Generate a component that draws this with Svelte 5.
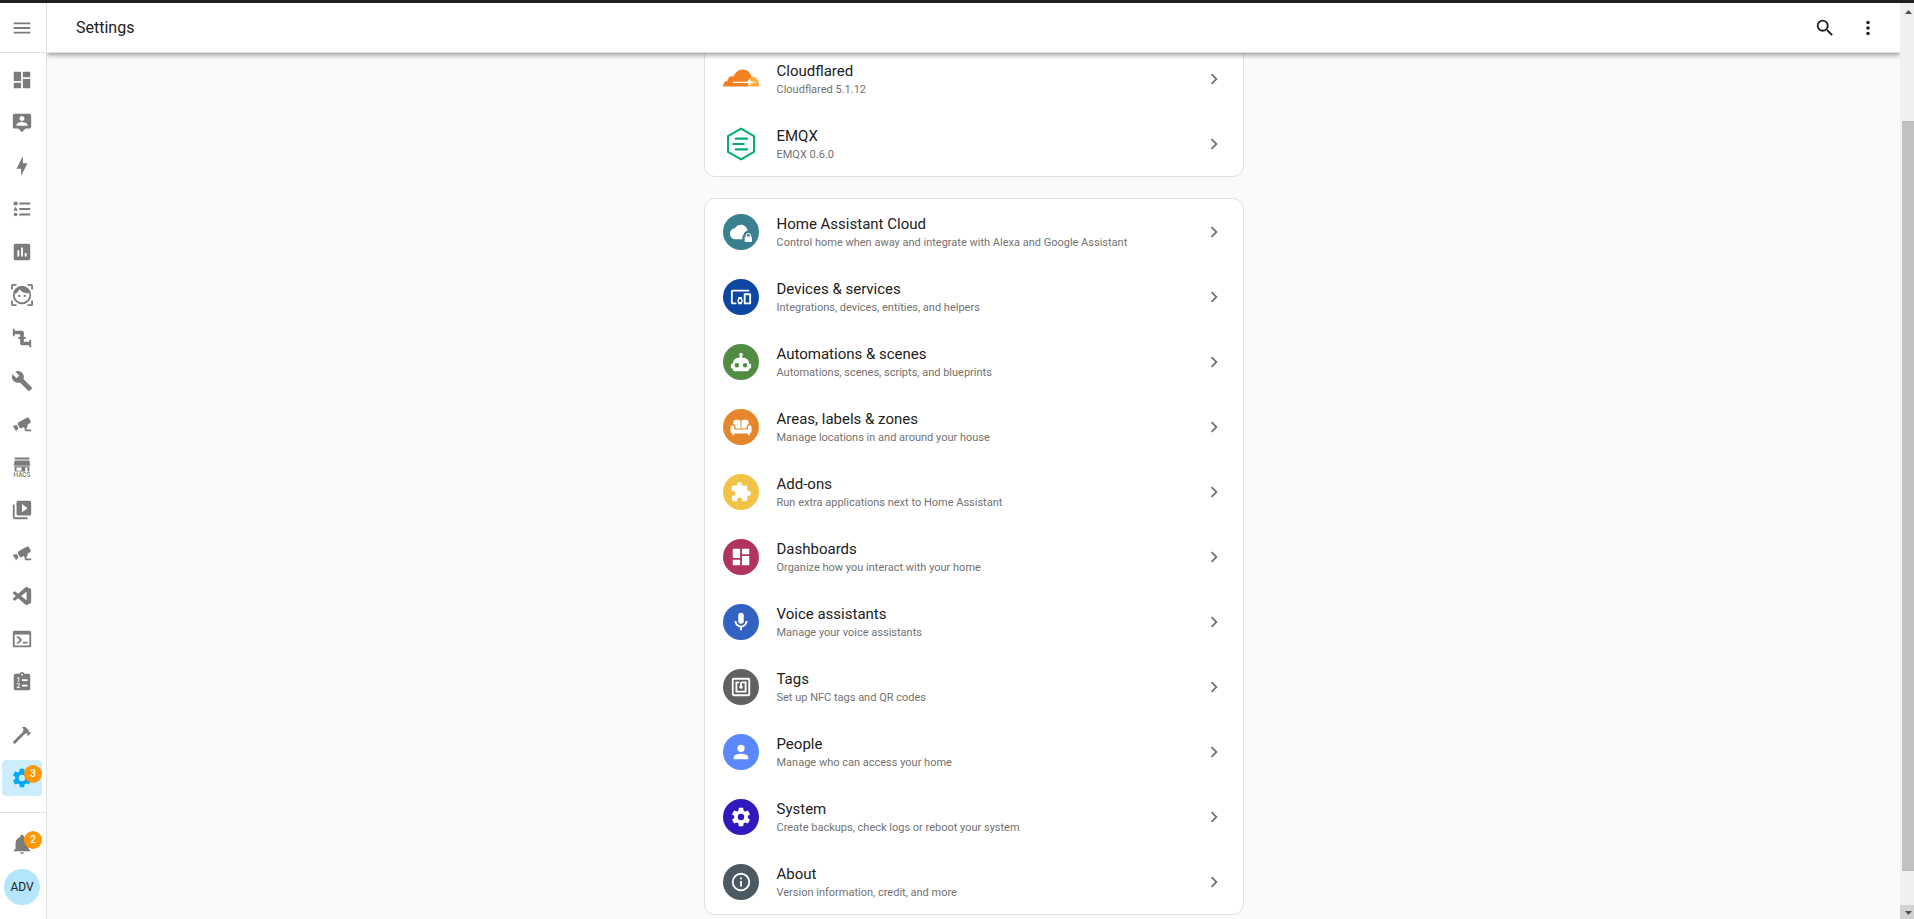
<script>
  const icons = {
    menu: "M3,6H21V8H3V6M3,11H21V13H3V11M3,16H21V18H3V16Z",
    dashboard: "M13,3V9H21V3M13,21H21V11H13M3,21H11V15H3M3,13H11V3H3V13Z",
    tooltipAccount:
      "M20,2H4A2,2 0 0,0 2,4V16A2,2 0 0,0 4,18H8L12,22L16,18H20A2,2 0 0,0 22,16V4A2,2 0 0,0 20,2M12,4.3C13.5,4.3 14.7,5.5 14.7,7C14.7,8.5 13.5,9.7 12,9.7C10.5,9.7 9.3,8.5 9.3,7C9.3,5.5 10.5,4.3 12,4.3M18,15H6V14.1C6,12.1 10,11 12,11C14,11 18,12.1 18,14.1V15Z",
    bolt: "M11 15H6L13 1V9H18L11 23V15Z",
    list: "M5,9.5L7.5,14H2.5L5,9.5M3,4H7V8H3V4M5,20A2,2 0 0,0 7,18A2,2 0 0,0 5,16A2,2 0 0,0 3,18A2,2 0 0,0 5,20M9,5V7H21V5H9M9,19H21V17H9V19M9,13H21V11H9V13Z",
    chart: "M9 17H7V10H9V17M13 17H11V7H13V17M17 17H15V13H17V17M19 3H5C3.9 3 3 3.9 3 5V19C3 20.1 3.9 21 5 21H19C20.1 21 21 20.1 21 19V5C21 3.9 20.1 3 19 3Z",
    face: "M9,11.75A1.25,1.25 0 0,0 7.75,13A1.25,1.25 0 0,0 9,14.25A1.25,1.25 0 0,0 10.25,13A1.25,1.25 0 0,0 9,11.75M15,11.75A1.25,1.25 0 0,0 13.75,13A1.25,1.25 0 0,0 15,14.25A1.25,1.25 0 0,0 16.25,13A1.25,1.25 0 0,0 15,11.75M12,2A10,10 0 0,0 2,12A10,10 0 0,0 12,22A10,10 0 0,0 22,12A10,10 0 0,0 12,2M12,20C7.59,20 4,16.41 4,12C4,11.71 4,11.42 4.05,11.14C6.41,10.09 8.28,8.16 9.26,5.77C11.07,8.33 14.05,10 17.42,10C18.2,10 18.95,9.91 19.67,9.74C19.88,10.45 20,11.21 20,12C20,16.41 16.41,20 12,20M0,2A2,2 0 0,1 2,0H6V2H2V6H0V2M24,22A2,2 0 0,1 22,24H18V22H22V18H24V22M2,24A2,2 0 0,1 0,22V18H2V22H6V24H2M22,0A2,2 0 0,1 24,2V6H22V2H18V0H22Z",
    pipe: "M22,14H20V16H14V13H16V11H14V6A2,2 0 0,0 12,4H4V2H2V10H4V8H10V11H8V13H10V18A2,2 0 0,0 12,20H20V22H22",
    wrench:
      "M22.7,19L13.6,9.9C14.5,7.6 14,4.9 12.1,3C10.1,1 7.1,0.6 4.7,1.7L9,6L6,9L1.6,4.7C0.4,7.1 0.9,10.1 2.9,12.1C4.8,14 7.5,14.5 9.8,13.6L18.9,22.7C19.3,23.1 19.9,23.1 20.3,22.7L22.6,20.4C23.1,20 23.1,19.3 22.7,19Z",
    cctv: "M18.15,4.94C17.77,4.91 17.37,5 17,5.2L8.35,10.2C7.39,10.76 7.07,12 7.62,12.94L9.12,15.53C9.67,16.5 10.89,16.82 11.85,16.27L13.65,15.23C13.92,15.69 14.32,16.06 14.81,16.27V18.04C14.81,19.13 15.7,20 16.81,20H22V18.04H16.81V16.27C17.72,15.87 18.31,14.97 18.31,14C18.31,13.54 18.19,13.11 17.97,12.73L20.5,11.27C21.47,10.71 21.8,9.5 21.24,8.53L19.74,5.94C19.4,5.34 18.79,5 18.15,4.94M6.22,13.17L2,13.87L2.75,15.17L4.75,18.63L5.5,19.93L8.22,16.63L6.22,13.17Z",
    playBox:
      "M4,6H2V20A2,2 0 0,0 4,22H18V20H4V6M20,2H8A2,2 0 0,0 6,4V16A2,2 0 0,0 8,18H20A2,2 0 0,0 22,16V4A2,2 0 0,0 20,2M12,14.5V5.5L18,10L12,14.5Z",
    vscode:
      "M23.15 2.587L18.21.21a1.494 1.494 0 0 0-1.705.29l-9.46 8.63-4.12-3.128a.999.999 0 0 0-1.276.057L.327 7.261A1 1 0 0 0 .326 8.74L3.899 12 .326 15.26a1 1 0 0 0 .001 1.479L1.65 17.94a.999.999 0 0 0 1.276.057l4.12-3.128 9.46 8.63a1.492 1.492 0 0 0 1.704.29l4.942-2.377A1.5 1.5 0 0 0 24 20.06V3.939a1.5 1.5 0 0 0-.85-1.352zm-5.146 14.861L10.826 12l7.178-5.448v10.896z",
    console:
      "M20,19V7H4V19H20M20,3A2,2 0 0,1 22,5V19A2,2 0 0,1 20,21H4A2,2 0 0,1 2,19V5C2,3.89 2.9,3 4,3H20M13,17V15H18V17H13M9.58,13L5.57,9H8.4L11.7,12.3C12.09,12.69 12.09,13.33 11.7,13.72L8.42,17H5.59L9.58,13Z",
    hammer:
      "M2,19.63L13.43,8.2L12.72,7.5L14.14,6.07L12,3.89C13.2,2.7 15.09,2.7 16.27,3.89L19.87,7.5L18.45,8.91H21.29L22,9.62L18.45,13.21L17.74,12.5V9.62L16.27,11.04L15.56,10.33L4.13,21.76L2,19.63Z",
    cog: "M12,15.5A3.5,3.5 0 0,1 8.5,12A3.5,3.5 0 0,1 12,8.5A3.5,3.5 0 0,1 15.5,12A3.5,3.5 0 0,1 12,15.5M19.43,12.97C19.47,12.65 19.5,12.33 19.5,12C19.5,11.67 19.47,11.34 19.43,11L21.54,9.37C21.73,9.22 21.78,8.95 21.66,8.73L19.66,5.27C19.54,5.05 19.27,4.96 19.05,5.05L16.56,6.05C16.04,5.66 15.5,5.32 14.87,5.07L14.5,2.42C14.46,2.18 14.25,2 14,2H10C9.75,2 9.54,2.18 9.5,2.42L9.13,5.07C8.5,5.32 7.96,5.66 7.44,6.05L4.95,5.05C4.73,4.96 4.46,5.05 4.34,5.27L2.34,8.73C2.21,8.95 2.27,9.22 2.46,9.37L4.57,11C4.53,11.34 4.5,11.67 4.5,12C4.5,12.33 4.53,12.65 4.57,12.97L2.46,14.63C2.27,14.78 2.21,15.05 2.34,15.27L4.34,18.73C4.46,18.95 4.73,19.03 4.95,18.95L7.44,17.94C7.96,18.34 8.5,18.68 9.13,18.93L9.5,21.58C9.54,21.82 9.75,22 10,22H14C14.25,22 14.46,21.82 14.5,21.58L14.87,18.93C15.5,18.67 16.04,18.34 16.56,17.94L19.05,18.95C19.27,19.03 19.54,18.95 19.66,18.73L21.66,15.27C21.78,15.05 21.73,14.78 21.54,14.63L19.43,12.97Z",
    bell: "M21,19V20H3V19L5,17V11C5,7.9 7.03,5.17 10,4.29C10,4.19 10,4.1 10,4A2,2 0 0,1 12,2A2,2 0 0,1 14,4C14,4.1 14,4.19 14,4.29C16.97,5.17 19,7.9 19,11V17L21,19M14,21A2,2 0 0,1 12,23A2,2 0 0,1 10,21",
    magnify:
      "M9.5,3A6.5,6.5 0 0,1 16,9.5C16,11.11 15.41,12.59 14.44,13.73L14.71,14H15.5L20.5,19L19,20.5L14,15.5V14.71L13.73,14.44C12.59,15.41 11.11,16 9.5,16A6.5,6.5 0 0,1 3,9.5A6.5,6.5 0 0,1 9.5,3M9.5,5C7,5 5,7 5,9.5C5,12 7,14 9.5,14C12,14 14,12 14,9.5C14,7 12,5 9.5,5Z",
    dots: "M12,16A2,2 0 0,1 14,18A2,2 0 0,1 12,20A2,2 0 0,1 10,18A2,2 0 0,1 12,16M12,10A2,2 0 0,1 14,12A2,2 0 0,1 12,14A2,2 0 0,1 10,12A2,2 0 0,1 12,10M12,4A2,2 0 0,1 14,6A2,2 0 0,1 12,8A2,2 0 0,1 10,6A2,2 0 0,1 12,4Z",
    chevron: "M8.59,16.58L13.17,12L8.59,7.41L10,6L16,12L10,18L8.59,16.58Z",
    cloudLock:
      "M6 20A6 6 0 0 1 0 14C0 10.9 2.34 8.36 5.35 8.03C6.6 5.64 9.11 4 12 4C15.64 4 18.5 6.6 19.2 10.5C16.6 10.9 14.9 12.9 14.7 15.3C13.9 15.8 13.5 16.6 13.5 17.5V20H6ZM22.8 17V15.5C22.8 14.1 21.4 13 20 13S17.2 14.1 17.2 15.5V17C16.6 17 16 17.6 16 18.2V21.7C16 22.4 16.6 23 17.2 23H22.7C23.4 23 24 22.4 24 21.8V18.3C24 17.6 23.4 17 22.8 17M21.5 17H18.5V15.5C18.5 14.7 19.2 14.2 20 14.2S21.5 14.7 21.5 15.5V17Z",
    devices:
      "M3 6H21V4H3C1.9 4 1 4.9 1 6V18C1 19.1 1.9 20 3 20H7V18H3V6M13 12H9V13.78C8.39 14.33 8 15.11 8 16C8 16.89 8.39 17.67 9 18.22V20H13V18.22C13.61 17.67 14 16.88 14 16S13.61 14.33 13 13.78V12M11 17.5C10.17 17.5 9.5 16.83 9.5 16S10.17 14.5 11 14.5 12.5 15.17 12.5 16 11.83 17.5 11 17.5M22 8H16C15.5 8 15 8.5 15 9V19C15 19.5 15.5 20 16 20H22C22.5 20 23 19.5 23 19V9C23 8.5 22.5 8 22 8M21 18H17V10H21V18Z",
    robot:
      "M12,2A2,2 0 0,1 14,4C14,4.74 13.6,5.39 13,5.73V7H14A7,7 0 0,1 21,14H22A1,1 0 0,1 23,15V18A1,1 0 0,1 22,19H21V20A2,2 0 0,1 19,22H5A2,2 0 0,1 3,20V19H2A1,1 0 0,1 1,18V15A1,1 0 0,1 2,14H3A7,7 0 0,1 10,7H11V5.73C10.4,5.39 10,4.74 10,4A2,2 0 0,1 12,2M7.5,13A2.5,2.5 0 0,0 5,15.5A2.5,2.5 0 0,0 7.5,18A2.5,2.5 0 0,0 10,15.5A2.5,2.5 0 0,0 7.5,13M16.5,13A2.5,2.5 0 0,0 14,15.5A2.5,2.5 0 0,0 16.5,18A2.5,2.5 0 0,0 19,15.5A2.5,2.5 0 0,0 16.5,13Z",
    sofa: "M6.5 4H9.7A1.8 1.8 0 0 1 11.5 5.8V13.5H6V12A3.6 3.6 0 0 0 3.7 8.7V6.8A2.8 2.8 0 0 1 6.5 4ZM17.5 4H14.3A1.8 1.8 0 0 0 12.5 5.8V13.5H18V12A3.6 3.6 0 0 1 20.3 8.7V6.8A2.8 2.8 0 0 0 17.5 4ZM2.5 10A2 2 0 0 1 4.5 12V14.8H19.5V12A2 2 0 0 1 23.5 12V17A2 2 0 0 1 21.5 19V21H19.5V19H4.5V21H2.5V19A2 2 0 0 1 .5 17V12A2 2 0 0 1 2.5 10Z",
    puzzle:
      "M20.5,11H19V7C19,5.89 18.1,5 17,5H13V3.5A2.5,2.5 0 0,0 10.5,1A2.5,2.5 0 0,0 8,3.5V5H4A2,2 0 0,0 2,7V10.8H3.5C5,10.8 6.2,12 6.2,13.5C6.2,15 5,16.2 3.5,16.2H2V20A2,2 0 0,0 4,22H7.8V20.5C7.8,19 9,17.8 10.5,17.8C12,17.8 13.2,19 13.2,20.5V22H17A2,2 0 0,0 19,20V16H20.5A2.5,2.5 0 0,0 23,13.5A2.5,2.5 0 0,0 20.5,11Z",
    microphone:
      "M12,2A3,3 0 0,1 15,5V11A3,3 0 0,1 12,14A3,3 0 0,1 9,11V5A3,3 0 0,1 12,2M19,11C19,14.53 16.39,17.44 13,17.93V21H11V17.93C7.61,17.44 5,14.53 5,11H7A5,5 0 0,0 12,16A5,5 0 0,0 17,11H19Z",
    nfc: "M18,6H13A2,2 0 0,0 11,8V10.28C10.41,10.62 10,11.26 10,12A2,2 0 0,0 12,14C13.11,14 14,13.1 14,12C14,11.26 13.6,10.62 13,10.28V8H16V16H8V8H10V6H8L6,6V18H18M20,20H4V4H20M20,2H4A2,2 0 0,0 2,4V20A2,2 0 0,0 4,22H20C21.11,22 22,21.1 22,20V4C22,2.89 21.11,2 20,2Z",
    account:
      "M12,4A4,4 0 0,1 16,8A4,4 0 0,1 12,12A4,4 0 0,1 8,8A4,4 0 0,1 12,4M12,14C16.42,14 20,15.79 20,18V20H4V18C4,15.79 7.58,14 12,14Z",
    info: "M11,9H13V7H11M12,20C7.59,20 4,16.41 4,12C4,7.59 7.59,4 12,4C16.41,4 20,7.59 20,12C20,16.41 16.41,20 12,20M12,2A10,10 0 0,0 2,12A10,10 0 0,0 12,22A10,10 0 0,0 22,12A10,10 0 0,0 12,2M11,17H13V11H11V17Z",
  };

  const panels = [
    { icon: "dashboard", name: "Overview" },
    { icon: "tooltipAccount", name: "Map" },
    { icon: "bolt", name: "Energy" },
    { icon: "list", name: "Logbook" },
    { icon: "chart", name: "History" },
    { icon: "face", name: "Double Take" },
    { icon: "pipe", name: "Pipes" },
    { icon: "wrench", name: "Configurator" },
    { icon: "cctv", name: "Cameras" },
    { icon: "hacs", name: "HACS" },
    { icon: "playBox", name: "Media" },
    { icon: "cctv", name: "Frigate" },
    { icon: "vscode", name: "Studio Code Server" },
    { icon: "console", name: "Terminal" },
    { icon: "todo", name: "To-do lists" },
  ];

  const addons = [
    { logo: "cloudflared", title: "Cloudflared", info: "Cloudflared 5.1.12" },
    { logo: "emqx", title: "EMQX", info: "EMQX 0.6.0" },
  ];

  const pages = [
    { icon: "cloudLock", color: "#3b808e", title: "Home Assistant Cloud", info: "Control home when away and integrate with Alexa and Google Assistant" },
    { icon: "devices", color: "#0d47a1", title: "Devices & services", info: "Integrations, devices, entities, and helpers" },
    { icon: "robot", color: "#518c43", title: "Automations & scenes", info: "Automations, scenes, scripts, and blueprints" },
    { icon: "sofa", color: "#e48629", title: "Areas, labels & zones", info: "Manage locations in and around your house" },
    { icon: "puzzle", color: "#f1c447", title: "Add-ons", info: "Run extra applications next to Home Assistant" },
    { icon: "dashboard", color: "#b1345c", title: "Dashboards", info: "Organize how you interact with your home" },
    { icon: "microphone", color: "#3263c3", title: "Voice assistants", info: "Manage your voice assistants" },
    { icon: "nfc", color: "#616161", title: "Tags", info: "Set up NFC tags and QR codes" },
    { icon: "account", color: "#5a87fa", title: "People", info: "Manage who can access your home" },
    { icon: "cog", color: "#301abe", title: "System", info: "Create backups, check logs or reboot your system" },
    { icon: "info", color: "#4a5963", title: "About", info: "Version information, credit, and more" },
  ];
</script>

{#snippet icon(name)}
  {#if name === "hacs"}
    <svg class="icon" viewBox="0 0 24 24" aria-hidden="true">
      <path d="M4 1.500H20V3.800H4ZM4 4.800H20L21 10H3ZM4 11.500H20V17H18V12.500H15.500V17H4ZM6 12.500V16H11.500V12.500Z" />
      <path opacity="0.7" d="M3 10H21V11.500H3Z" />
      <text x="12" y="23" text-anchor="middle">HACS</text>
    </svg>
  {:else if name === "todo"}
    <svg class="icon" viewBox="0 0 24 24" aria-hidden="true">
      <path d="M19 3H14.8A3 3 0 0 0 9.2 3H5A2 2 0 0 0 3 5V19A2 2 0 0 0 5 21H19A2 2 0 0 0 21 19V5A2 2 0 0 0 19 3M12 3A1 1 0 1 1 12 5A1 1 0 1 1 12 3M12 9H18V11H12ZM12 15H18V17H12Z" />
      <g class="digits">
        <text x="6" y="12.5">1</text>
        <text x="6" y="19">2</text>
      </g>
    </svg>
  {:else}
    <svg class="icon" viewBox={name === "vscode" ? "-2.4 -2.4 28.8 28.8" : "0 0 24 24"} aria-hidden="true">
      <path d={icons[name]} />
    </svg>
  {/if}
{/snippet}

{#snippet row(title, info)}
  <span class="text">
    <span class="title">{title}</span>
    <span class="info">{info}</span>
  </span>
  <span class="next">{@render icon("chevron")}</span>
{/snippet}

<div class="app">
  <aside class="sidebar">
    <div class="menu">
      <button aria-label="Sidebar toggle">{@render icon("menu")}</button>
    </div>
    <nav>
      {#each panels as panel}
        <a href="#panel" aria-label={panel.name}>{@render icon(panel.icon)}</a>
      {/each}
      <a class="tools" href="#tools" aria-label="Developer tools">{@render icon("hammer")}</a>
      <a class="active" href="#settings" aria-label="Settings">
        {@render icon("cog")}
        <span class="badge">3</span>
      </a>
    </nav>
    <div class="bottom">
      <button aria-label="Notifications">
        {@render icon("bell")}
        <span class="badge">2</span>
      </button>
      <a class="avatar" href="#profile">ADV</a>
    </div>
  </aside>

  <div class="panel">
    <header>
      <h1>Settings</h1>
      <button aria-label="Search">{@render icon("magnify")}</button>
      <button aria-label="Menu">{@render icon("dots")}</button>
    </header>
    <main>
      <div class="content">
        <section class="card">
          {#each addons as addon}
            <a class="row" href="#addon">
              <span class="logo">
                {#if addon.logo === "cloudflared"}
                  <svg viewBox="0 0 36 20" aria-hidden="true">
                    <path fill="#f4811f" d="M0 17.6C0 14 2.200 11.700 5 11.500C4.800 8.700 7.700 6.200 10.600 7.800C12 3.200 15.600.4 19.800.4C24.200.4 27.200 3.200 28.300 7.200C27.500 10.300 26.500 14 24.500 17.600Z" />
                    <path fill="#faad3f" d="M28.500 7.600C33 7.400 36 11.500 36 16C36 17 35.900 17.300 35.700 17.600H24.500Z" />
                    <path fill="#fff" d="M10 12.700H24.500L26.500 9.200L28 12.400L33 12.900V13.500L28 14L26.500 17.600L25 14H10Z" />
                  </svg>
                {:else}
                  <svg viewBox="0 0 36 36" fill="none" stroke="#00b173" aria-hidden="true">
                    <path stroke-width="2" d="M18 2.600L31 10.100V25.900L18 33.400L5 25.900V10.100Z" />
                    <path stroke-width="2.200" d="M12 12.700H25M9.500 18H21.500M12 23.300H25" />
                  </svg>
                {/if}
              </span>
              {@render row(addon.title, addon.info)}
            </a>
          {/each}
        </section>

        <section class="card">
          {#each pages as page}
            <a class="row" href="#page">
              <span class="circle" style="background-color: {page.color}">{@render icon(page.icon)}</span>
              {@render row(page.title, page.info)}
            </a>
          {/each}
        </section>
      </div>
    </main>
  </div>

  <div class="scrollbar" aria-hidden="true">
    <svg viewBox="0 0 14 14"><path d="M5 11L8.500 7L12 11Z" /></svg>
    <div class="track"><div class="thumb"></div></div>
    <svg class="down" viewBox="0 0 14 14"><path d="M5 6L8.500 10L12 6Z" /></svg>
  </div>
</div>

<style>
  :global(body) {
    background: #fafafa;
    font-family: Roboto, "Liberation Sans", sans-serif;
    color: #212121;
  }

  .app {
    display: flex;
    box-sizing: border-box;
    height: 100vh;
    border-top: 3px solid #231f20;
    overflow: hidden;
  }

  a {
    color: inherit;
    text-decoration: none;
  }

  button {
    display: flex;
    align-items: center;
    justify-content: center;
    padding: 0;
    border: none;
    background: none;
    color: inherit;
    font: inherit;
    cursor: pointer;
  }

  .icon {
    display: block;
    width: 22px;
    height: 22px;
    fill: currentColor;
    fill-rule: evenodd;
  }

  .icon text {
    font-size: 7px;
    font-weight: 500;
  }

  .digits {
    fill: #fff;
  }

  .sidebar {
    display: flex;
    flex-direction: column;
    flex: none;
    width: 46px;
    border-right: 1px solid #e0e0e0;
    background: #fff;
    color: #7b7b7b;
  }

  .menu {
    height: 49px;
    border-bottom: 1px solid #e0e0e0;
  }

  .menu button {
    width: 44px;
    height: 100%;
  }

  nav {
    display: flex;
    flex-direction: column;
    flex: 1;
    gap: 7px;
    padding: 9px 4px 0 2px;
  }

  nav a,
  .bottom button {
    position: relative;
    display: flex;
    align-items: center;
    justify-content: center;
    width: 40px;
    height: 36px;
    border-radius: 4px;
  }

  nav .tools {
    margin-top: auto;
  }

  nav .active {
    margin-bottom: 16px;
    background: #cbedfd;
    color: #03a9f4;
  }

  .badge {
    position: absolute;
    top: 5px;
    right: 0;
    width: 18px;
    height: 18px;
    border-radius: 50%;
    background: #ff9800;
    color: #fff;
    font-size: 10px;
    font-weight: 500;
    line-height: 18px;
    text-align: center;
  }

  .bottom {
    display: flex;
    flex-direction: column;
    gap: 7px;
    padding: 13px 4px 14px 2px;
    border-top: 1px solid #e0e0e0;
  }

  .avatar {
    width: 36px;
    height: 36px;
    margin-left: 2px;
    border-radius: 50%;
    background: #b3e5fc;
    color: #212121;
    font-size: 12px;
    line-height: 36px;
    text-align: center;
  }

  .panel {
    display: flex;
    flex-direction: column;
    flex: 1;
    min-width: 0;
  }

  header {
    z-index: 1;
    display: flex;
    align-items: center;
    height: 49px;
    padding: 0 11px 0 29px;
    border-bottom: 1px solid #e0e0e0;
    background: #fff;
    box-shadow: 0 2px 5px rgba(0, 0, 0, 0.4);
    clip-path: inset(0 0 -12px 0);
  }

  h1 {
    flex: 1;
    margin: 0;
    font-size: 16px;
    font-weight: 400;
  }

  header button {
    width: 43px;
    height: 43px;
  }

  main {
    flex: 1;
    min-height: 0;
    overflow: hidden;
  }

  .content {
    display: flex;
    flex-direction: column;
    gap: 21px;
    max-width: 540px;
    margin: -8px auto 0;
  }

  .card {
    border: 1px solid #e0e0e0;
    border-radius: 11px;
    background: #fff;
    overflow: hidden;
  }

  .row {
    display: flex;
    align-items: center;
    gap: 18px;
    height: 65px;
    padding: 0 18px;
  }

  .circle,
  .logo {
    display: flex;
    align-items: center;
    justify-content: center;
    flex: none;
    width: 36px;
    height: 36px;
  }

  .circle {
    border-radius: 50%;
    color: #fff;
  }

  .logo svg {
    width: 100%;
  }

  .text {
    display: flex;
    flex-direction: column;
    flex: 1;
    padding-top: 2px;
  }

  .title {
    font-size: 15px;
    line-height: 20px;
  }

  .info {
    color: #727272;
    font-size: 11px;
    line-height: 18px;
  }

  .next {
    color: #727272;
  }

  .scrollbar {
    display: flex;
    flex-direction: column;
    flex: none;
    width: 14px;
    background: #f0f0f0;
  }

  .scrollbar svg {
    width: 14px;
    height: 14px;
    fill: #505050;
  }

  .scrollbar .down {
    background: #d2d2d2;
  }

  .track {
    display: flex;
    flex-direction: column;
    flex: 1;
  }

  .thumb {
    flex: 1;
    margin: 104px 0 34px 2px;
    background: #c1c1c1;
  }
</style>
